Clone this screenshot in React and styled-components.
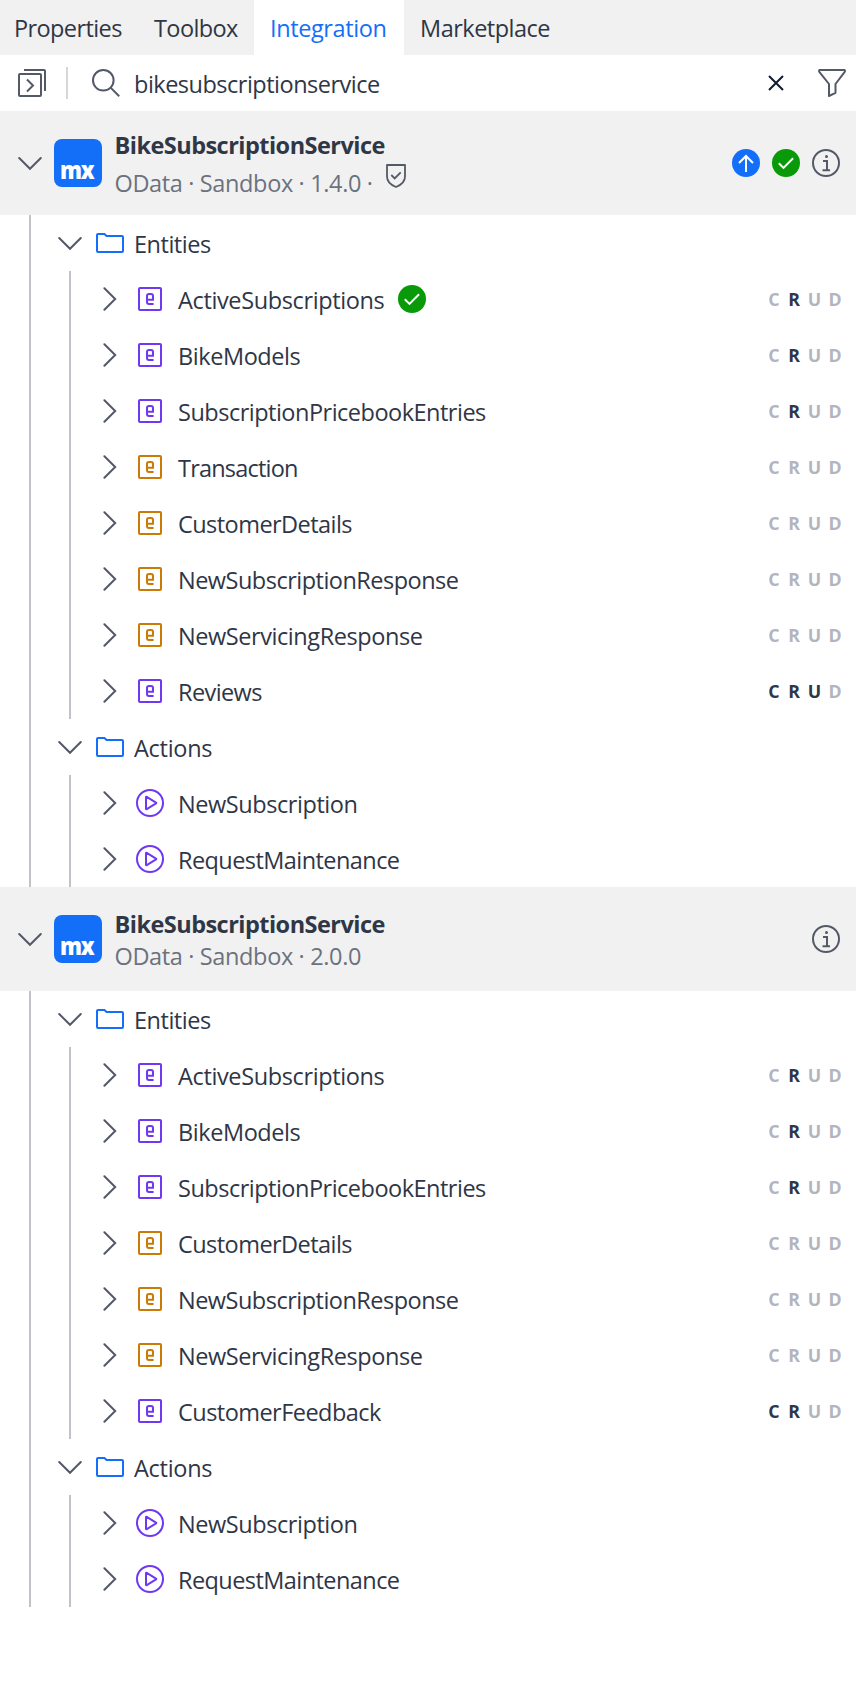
import React from "react";
import styled, { createGlobalStyle } from "styled-components";

const GlobalStyle = createGlobalStyle`
  * { box-sizing: border-box; }
  body { margin: 0; background: #fff; }
`;

const Panel = styled.div`
  width: 856px;
  min-height: 1686px;
  background: #fff;
  color: #2f3646;
  font-family: "Open Sans", "Noto Sans", sans-serif;
  font-size: 23.5px;
`;

const Tabs = styled.nav`
  display: flex;
  height: 55px;
  background: #f1f1f1;
`;

const Tab = styled.div`
  width: ${(p) => p.$width}px;
  padding: 1px 0 0 ${(p) => p.$pad}px;
  line-height: 54px;
  white-space: nowrap;
  letter-spacing: ${(p) => p.$track}px;
  background: ${(p) => (p.$active ? "#fff" : "transparent")};
  color: ${(p) => (p.$active ? "#146ff8" : "#2f3646")};
`;

const SearchBar = styled.div`
  display: flex;
  align-items: center;
  height: 56px;
  padding: 0 10px 0 18px;
`;

const Divider = styled.span`
  width: 2px;
  height: 32px;
  margin: 0 24px 0 20px;
  background: #d6d7da;
`;

const Query = styled.span`
  flex: 1;
  margin: 2px 0 0 14px;
  white-space: nowrap;
  letter-spacing: -0.5px;
`;

const ClearSlot = styled.span`
  display: flex;
  margin-right: 34px;
`;

const ServiceHeader = styled.header`
  display: flex;
  align-items: center;
  height: 104px;
  padding: 0 16px 0 18px;
  background: #f1f1f1;
`;

const Logo = styled.div`
  width: 48px;
  height: 48px;
  margin: 0 12.5px 0 12px;
  padding-left: 6px;
  border-radius: 8px;
  background: #146ff8;
  color: #fff;
  overflow: hidden;
`;

const LogoText = styled.span`
  display: block;
  width: 44px;
  font-size: 25px;
  font-weight: 800;
  line-height: 60px;
  letter-spacing: -1.5px;
  transform: scaleX(0.88);
  transform-origin: left;
`;

const ServiceText = styled.div`
  flex: 1;
  padding-top: 2px;
`;

const ServiceName = styled.div`
  font-weight: 700;
  line-height: 32px;
  letter-spacing: -0.53px;
`;

const ServiceMeta = styled.div`
  display: flex;
  height: ${(p) => (p.$tall ? 38 : 32)}px;
  align-items: flex-end;
  color: #6c717e;
  line-height: 32px;
  letter-spacing: -0.36px;
`;

const ShieldSlot = styled.span`
  display: flex;
  align-self: flex-start;
  margin: 3px 0 0 13px;
`;

const Status = styled.div`
  display: flex;
  gap: 12px;
`;

const Tree = styled.div`
  margin-left: 29px;
  border-left: 2px solid #c1c1c9;
`;

const FolderRow = styled.div`
  display: flex;
  align-items: center;
  height: 56px;
  padding-left: 27px;
`;

const Branch = styled.div`
  margin-left: 38px;
  border-left: 2px solid #c1c1c9;
`;

const ItemRow = styled.div`
  display: flex;
  align-items: center;
  height: 56px;
  padding: 0 11px 0 27px;
`;

const IconSlot = styled.span`
  display: flex;
  margin-left: ${(p) => p.$left}px;
`;

const Label = styled.span`
  margin: 2px 0 0 ${(p) => p.$left}px;
  white-space: nowrap;
  letter-spacing: ${(p) => p.$track}px;
`;

const Crud = styled.span`
  display: grid;
  grid-template-columns: 20px 20px 21px 20px;
  margin-left: auto;
  text-align: center;
  font-size: 17.8px;
  font-weight: 700;
`;

const CrudLetter = styled.span`
  color: ${(p) => (p.$on ? "#2f3646" : "#b3b5be")};
`;

const IconSvg = styled.svg`
  display: block;
  flex: none;
`;

const Icon = ({ size = 28, children, color = "#545968" }) => (
  <IconSvg width={size} height={size} viewBox={`0 0 ${size} ${size}`} fill="none" stroke={color} strokeWidth="2">
    {children}
  </IconSvg>
);

const ChevronDown = () => (
  <Icon size={24}><path d="M1.2 7l10.8 10.8L22.800 7" strokeLinecap="round" /></Icon>
);
const ChevronRight = () => (
  <Icon size={24}><path d="M6.4 1.2l10.8 10.8L6.400 22.800" strokeLinecap="round" /></Icon>
);
const FolderIcon = () => (
  <Icon color="#146ff8"><path d="M1 22V6q0-1 1-1h6.500l2 2H26q1 0 1 1v14q0 1-1 1H2q-1 0-1-1z" /></Icon>
);
const EntityIcon = ({ color }) => (
  <Icon color={color}>
    <rect x="3" y="3" width="22" height="22" rx="1" />
    <path d="M17.600 19H13q-2 0-2-2v-6q0-2 2-2h2q2 0 2 2v3.800h-6" />
  </Icon>
);
const ActionIcon = () => (
  <Icon color="#7038f2">
    <circle cx="14" cy="14" r="13" />
    <path d="M10 8.200v11.600q0 .8.8.4L20 14.400q.6-.4 0-.8L10.800 7.800q-.8-.4-.8.4z" />
  </Icon>
);
const CheckBadge = () => (
  <Icon><circle cx="14" cy="14" r="14" fill="#089a08" stroke="none" /><path d="M6.800 14.200l4.700 4.700 9.600-9.600" stroke="#fff" /></Icon>
);
const UpBadge = () => (
  <Icon><circle cx="14" cy="14" r="14" fill="#146ff8" stroke="none" /><path d="M14 23V7M7 14l7-7 7 7" stroke="#fff" /></Icon>
);
const InfoIcon = () => (
  <Icon>
    <circle cx="14" cy="14" r="13" />
    <path d="M11 12h4v9M10.500 21.200h7.500" />
    <circle cx="14.500" cy="7.400" r="1.500" fill="#545968" stroke="none" />
  </Icon>
);
const ShieldIcon = () => (
  <IconSvg width="20" height="24" viewBox="0 0 20 24" fill="none" stroke="#545968" strokeWidth="1.8">
    <path d="M1 1h18v11.500q0 7-9 10.500-9-3.500-9-10.500z" strokeLinejoin="round" />
    <path d="M5.300 11l3.400 3.400 6-6" />
  </IconSvg>
);
const PanelsIcon = () => (
  <Icon><rect x="1" y="5" width="22" height="22" rx="1" /><path d="M6 1h20q1 0 1 1v20M9 10.500l6 6-6 6" /></Icon>
);
const SearchIcon = () => (
  <Icon><circle cx="11.300" cy="11.300" r="10.300" /><path d="M18.600 18.600l8.600 8.600" /></Icon>
);
const CloseIcon = () => (
  <Icon size={16} color="#101c30"><path d="M1 1l14 14M15 1L1 15" /></Icon>
);
const FilterIcon = () => (
  <Icon><path d="M1.800 1h24.400q1.300.6.5 1.800L17.500 15v8.800L11 27V15L1.300 2.800Q.6 1.600 1.800 1z" strokeLinejoin="round" /></Icon>
);

const PURPLE = "#7038f2";
const ORANGE = "#cb7a05";

const TABS = [
  { name: "Properties", width: 139, pad: 14, track: -0.6 },
  { name: "Toolbox", width: 115, pad: 15, track: -0.6 },
  { name: "Integration", width: 150, pad: 16, track: -0.4, active: true },
  { name: "Marketplace", width: 180, pad: 16, track: -0.5 },
];

// Letter spacing for each name in the tree.
const TRACKING = {
  Entities: -0.48,
  Actions: -0.28,
  ActiveSubscriptions: -0.37,
  BikeModels: -0.43,
  SubscriptionPricebookEntries: -0.5,
  Transaction: -0.8,
  CustomerDetails: -0.55,
  NewSubscriptionResponse: -0.51,
  NewServicingResponse: -0.43,
  Reviews: -0.6,
  CustomerFeedback: -0.54,
  NewSubscription: -0.43,
  RequestMaintenance: -0.57,
};

const SERVICES = [
  {
    version: "1.4.0",
    current: true,
    entities: [
      { name: "ActiveSubscriptions", color: PURPLE, crud: "R", used: true },
      { name: "BikeModels", color: PURPLE, crud: "R" },
      { name: "SubscriptionPricebookEntries", color: PURPLE, crud: "R" },
      { name: "Transaction", color: ORANGE, crud: "" },
      { name: "CustomerDetails", color: ORANGE, crud: "" },
      { name: "NewSubscriptionResponse", color: ORANGE, crud: "" },
      { name: "NewServicingResponse", color: ORANGE, crud: "" },
      { name: "Reviews", color: PURPLE, crud: "CRU" },
    ],
  },
  {
    version: "2.0.0",
    entities: [
      { name: "ActiveSubscriptions", color: PURPLE, crud: "R" },
      { name: "BikeModels", color: PURPLE, crud: "R" },
      { name: "SubscriptionPricebookEntries", color: PURPLE, crud: "R" },
      { name: "CustomerDetails", color: ORANGE, crud: "" },
      { name: "NewSubscriptionResponse", color: ORANGE, crud: "" },
      { name: "NewServicingResponse", color: ORANGE, crud: "" },
      { name: "CustomerFeedback", color: PURPLE, crud: "CR" },
    ],
  },
];

const ACTIONS = ["NewSubscription", "RequestMaintenance"];

function Folder({ name, children }) {
  return (
    <>
      <FolderRow>
        <ChevronDown />
        <IconSlot $left={14}><FolderIcon /></IconSlot>
        <Label $left={10} $track={TRACKING[name]}>{name}</Label>
      </FolderRow>
      <Branch>{children}</Branch>
    </>
  );
}

function Item({ name, icon, children }) {
  return (
    <ItemRow>
      <ChevronRight />
      <IconSlot $left={14}>{icon}</IconSlot>
      <Label $left={14} $track={TRACKING[name]}>{name}</Label>
      {children}
    </ItemRow>
  );
}

function Service({ version, current, entities }) {
  return (
    <section>
      <ServiceHeader>
        <ChevronDown />
        <Logo><LogoText>mx</LogoText></Logo>
        <ServiceText>
          <ServiceName>BikeSubscriptionService</ServiceName>
          <ServiceMeta $tall={current}>
            <span>OData · Sandbox · {version}{current && " ·"}</span>
            {current && <ShieldSlot><ShieldIcon /></ShieldSlot>}
          </ServiceMeta>
        </ServiceText>
        <Status>
          {current && <UpBadge />}
          {current && <CheckBadge />}
          <InfoIcon />
        </Status>
      </ServiceHeader>
      <Tree>
        <Folder name="Entities">
          {entities.map((e) => (
            <Item key={e.name} name={e.name} icon={<EntityIcon color={e.color} />}>
              {e.used && <IconSlot $left={14}><CheckBadge /></IconSlot>}
              <Crud>
                {[..."CRUD"].map((c) => (
                  <CrudLetter key={c} $on={e.crud.includes(c)}>{c}</CrudLetter>
                ))}
              </Crud>
            </Item>
          ))}
        </Folder>
        <Folder name="Actions">
          {ACTIONS.map((name) => (
            <Item key={name} name={name} icon={<ActionIcon />} />
          ))}
        </Folder>
      </Tree>
    </section>
  );
}

export default function App() {
  return (
    <>
      <GlobalStyle />
      <Panel>
        <Tabs>
          {TABS.map((t) => (
            <Tab key={t.name} $width={t.width} $pad={t.pad} $track={t.track} $active={t.active}>{t.name}</Tab>
          ))}
        </Tabs>
        <SearchBar>
          <PanelsIcon />
          <Divider />
          <SearchIcon />
          <Query>bikesubscriptionservice</Query>
          <ClearSlot><CloseIcon /></ClearSlot>
          <FilterIcon />
        </SearchBar>
        {SERVICES.map((s) => (
          <Service key={s.version} {...s} />
        ))}
      </Panel>
    </>
  );
}
